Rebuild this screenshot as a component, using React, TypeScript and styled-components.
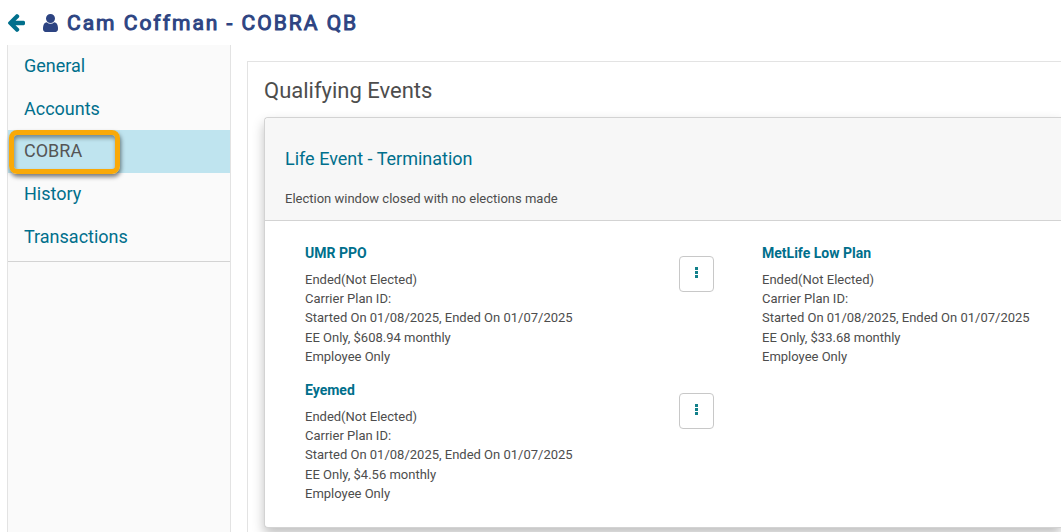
import React from "react";
import styled, { createGlobalStyle } from "styled-components";

const colors = {
  teal: "#006f8c",
  navy: "#2d4482",
  text: "#4d4d4d",
  line: "#e3e3e3",
  rule: "#d3d3d3",
  active: "#bfe4ef",
  highlight: "#f9a908",
};

const GlobalStyle = createGlobalStyle`
  *, *::before, *::after { box-sizing: border-box; }
  body {
    margin: 0;
    background: #fff;
    color: ${colors.text};
    font-family: Roboto, "Liberation Sans", sans-serif;
    font-size: 13px;
  }
  h1, h2, h3, p, ul { margin: 0; padding: 0; }
  ul { list-style: none; }
`;

const Page = styled.div`
  display: flex;
  flex-direction: column;
  min-height: 100vh;
`;

const Header = styled.header`
  display: flex;
  align-items: center;
  height: 45px;
  padding-left: 8px;
`;

const BackLink = styled.a`
  display: flex;
  width: 35px;
  color: ${colors.teal};
`;

const Title = styled.h1`
  display: flex;
  align-items: center;
  gap: 9px;
  color: ${colors.navy};
  font-size: 21px;
  font-weight: 400;
  line-height: 24px;
  letter-spacing: 2px;
  -webkit-text-stroke: 1px ${colors.navy};

  svg {
    stroke: none;
  }
`;

const Body = styled.div`
  display: flex;
  flex: 1;
  padding-left: 7px;
`;

const Sidebar = styled.nav`
  flex: 0 0 224px;
  background: #fafafa;
  border: solid ${colors.line};
  border-width: 0 1px;
`;

const NavList = styled.ul`
  display: grid;
  grid-template-rows: repeat(5, 1fr);
  height: 217px;
  border-bottom: 1px solid ${colors.rule};

  && {
    padding-bottom: 3px;
  }
`;

const NavItem = styled.li<{ $active?: boolean }>`
  position: relative;
  display: flex;
  background: ${(p) => (p.$active ? colors.active : "transparent")};
`;

const NavLink = styled.a<{ $active?: boolean }>`
  display: flex;
  flex: 1;
  align-items: center;
  padding-left: 16px;
  color: ${(p) => (p.$active ? "#555" : colors.teal)};
  font-size: 18px;
  line-height: 22px;
  text-decoration: none;
`;

const Callout = styled.span`
  position: absolute;
  top: 0;
  left: 1px;
  width: 111px;
  height: 44px;
  border: 5px solid ${colors.highlight};
  border-radius: 8px;
  box-shadow: 1px 3px 4px rgba(0, 0, 0, 0.5), inset 1px 3px 4px rgba(0, 0, 0, 0.4);
  pointer-events: none;
`;

const Main = styled.main`
  flex: 1;
  min-width: 0;
  margin: 16px 0 0 16px;
  padding: 16px 0 5px 16px;
  border: solid ${colors.line};
  border-width: 1px 0 0 1px;
`;

const SectionTitle = styled.h2`
  font-size: 22px;
  font-weight: 400;
  line-height: 26px;
`;

const Card = styled.section`
  margin-top: 13px;
  border: 1px solid ${colors.rule};
  border-right: 0;
  border-radius: 4px 0 0 4px;
  background: #fff;
  box-shadow: 0 6px 12px rgba(0, 0, 0, 0.25);
`;

const CardHeader = styled.div`
  height: 103px;
  padding: 30px 20px 0;
  background: #f7f7f7;
  border-bottom: 1px solid ${colors.rule};
  border-radius: 4px 0 0 0;
`;

const EventLink = styled.a`
  color: ${colors.teal};
  text-decoration: none;
`;

const EventTitle = styled.h3`
  font-size: 18px;
  font-weight: 400;
  line-height: 22px;
`;

const EventNote = styled.p`
  line-height: 18px;

  && {
    margin-top: 20px;
  }
`;

const Plans = styled.div`
  display: grid;
  grid-template-columns: minmax(0, 457px) 1fr;
  padding: 23px 0 9px 40px;
`;

const Plan = styled.article`
  display: flex;
  align-items: flex-start;
  justify-content: space-between;
  height: 137px;
`;

const PlanInfo = styled.div`
  white-space: nowrap;
`;

const PlanTitle = styled.h3`
  color: ${colors.teal};
  font-size: 14px;
  font-weight: 700;
  line-height: 19px;
`;

const Details = styled.ul`
  display: grid;
  grid-template-rows: repeat(5, 1fr);
  height: 96px;
  line-height: 19px;

  && {
    margin-top: 7px;
  }
`;

const MenuButton = styled.button`
  display: flex;
  align-items: flex-start;
  justify-content: center;
  width: 35px;
  height: 36px;
  margin: 12px 48px 0 0;
  padding: 10px 0 0;
  border: 1px solid #c8c8c8;
  border-radius: 4px;
  background: #fff;
  color: #12808a;
`;

const BackArrow = () => (
  <svg width="17" height="18" viewBox="64 200 1472 1520" fill="currentColor" aria-hidden="true">
    <path d="M1536 896v128q0 53-32.500 90.500t-84.500 37.500h-704l293 294q38 36 38 90t-38 90l-75 76q-37 37-90 37-52 0-91-37l-651-652q-37-37-37-90 0-52 37-91l651-650q38-38 91-38 52 0 90 38l75 74q38 38 38 91t-38 91l-293 293h704q52 0 84.500 37.500t32.500 90.500z" />
  </svg>
);

const UserIcon = () => (
  <svg width="15" height="18" viewBox="256 128 1280 1536" fill="currentColor" aria-hidden="true">
    <path d="M1536 1399q0 109-62.500 187t-150.500 78h-854q-88 0-150.500-78t-62.500-187q0-85 8.500-160.500t31.500-152 58.500-131 94-89 134.500-34.500q131 128 313 128t313-128q76 0 134.500 34.500t94 89 58.500 131 31.500 152 8.500 160.500zm-256-887q0 159-112.500 271.500t-271.500 112.500-271.500-112.500-112.500-271.500 112.500-271.500 271.500-112.500 271.500 112.500 112.500 271.500z" />
  </svg>
);

const Dots = () => (
  <svg width="3" height="11" viewBox="0 0 3 11" fill="currentColor" aria-hidden="true">
    <path d="M0 0h3v3H0zM0 4h3v3H0zM0 8h3v3H0z" />
  </svg>
);

const sections = ["General", "Accounts", "COBRA", "History", "Transactions"];

const plans = [
  { name: "UMR PPO", rate: "$608.94", menu: true },
  { name: "MetLife Low Plan", rate: "$33.68", menu: false },
  { name: "Eyemed", rate: "$4.56", menu: true },
];

export default function App() {
  return (
    <Page>
      <GlobalStyle />
      <Header>
        <BackLink href="#back" aria-label="Back">
          <BackArrow />
        </BackLink>
        <Title>
          <UserIcon />
          Cam Coffman - COBRA QB
        </Title>
      </Header>
      <Body>
        <Sidebar>
          <NavList>
            {sections.map((name) => {
              const active = name === "COBRA";
              return (
                <NavItem key={name} $active={active}>
                  <NavLink href={"#" + name.toLowerCase()} $active={active} aria-current={active ? "page" : undefined}>
                    {name}
                  </NavLink>
                  {active && <Callout />}
                </NavItem>
              );
            })}
          </NavList>
        </Sidebar>
        <Main>
          <SectionTitle>Qualifying Events</SectionTitle>
          <Card>
            <CardHeader>
              <EventTitle>
                <EventLink href="#event">Life Event - Termination</EventLink>
              </EventTitle>
              <EventNote>Election window closed with no elections made</EventNote>
            </CardHeader>
            <Plans>
              {plans.map((plan) => (
                <Plan key={plan.name}>
                  <PlanInfo>
                    <PlanTitle>{plan.name}</PlanTitle>
                    <Details>
                      <li>Ended(Not Elected)</li>
                      <li>Carrier Plan ID:</li>
                      <li>Started On 01/08/2025, Ended On 01/07/2025</li>
                      <li>EE Only, {plan.rate} monthly</li>
                      <li>Employee Only</li>
                    </Details>
                  </PlanInfo>
                  {plan.menu && (
                    <MenuButton type="button" aria-label={plan.name + " options"}>
                      <Dots />
                    </MenuButton>
                  )}
                </Plan>
              ))}
            </Plans>
          </Card>
        </Main>
      </Body>
    </Page>
  );
}
